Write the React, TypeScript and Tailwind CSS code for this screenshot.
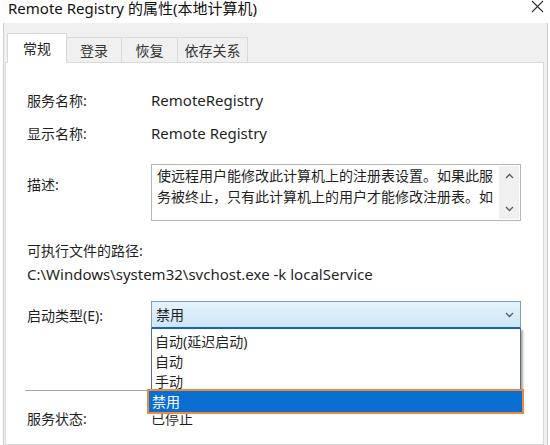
const tabs = [
  { name: "登录", w: "w-[55px]" },
  { name: "恢复", w: "w-[56px]" },
  { name: "依存关系", w: "w-[70px]" },
];

const options = ["自动(延迟启动)", "自动", "手动"];

function Chevron({ up = false }: { up?: boolean }) {
  return (
    <svg width="9" height="6" viewBox="0 0 9 6" className={up ? "rotate-180" : ""}>
      <path d="M1 1 L4.5 4.5 L8 1" fill="none" stroke="#5a5a5a" strokeWidth="1.3" />
    </svg>
  );
}

export default function App() {
  return (
    <div className="relative h-[445px] w-[550px] overflow-hidden bg-white text-[14px] text-[#1f1f1f] font-['Noto_Sans','Noto_Sans_CJK_SC',sans-serif]">
      {/* title bar */}
      <div className="flex h-[23px] items-start justify-between pl-[8px] pr-[6px]">
        <span className="-mt-[2px] text-[15px] leading-[20px] text-[#111]">
          Remote Registry 的属性(本地计算机)
        </span>
        <svg width="13" height="13" viewBox="0 0 13 13">
          <path d="M1 1 L12 12 M12 1 L1 12" stroke="#333" strokeWidth="1.1" />
        </svg>
      </div>

      {/* window body */}
      <div className="ml-[3px] mr-[2px] flex h-[422px] flex-col border-x border-[#cfcfcf] bg-[#f0f0f0]">
        <div className="flex items-end pl-[3px] pt-[10px]">
          <div className="relative z-10 -mb-px flex h-[30px] w-[60px] items-center justify-center border border-b-0 border-[#d9d9d9] bg-white pb-[1px]">
            常规
          </div>
          {tabs.map((t) => (
            <div
              key={t.name}
              className={`flex h-[25px] ${t.w} items-center justify-center border-r border-t border-[#d9d9d9] bg-[#f0f0f0] text-[#333]`}
            >
              {t.name}
            </div>
          ))}
        </div>

        <div className="ml-[1px] mr-[3px] flex flex-1 flex-col border border-[#d9d9d9] bg-white pl-[21px] pr-[22px] pt-[27px]">
          <div className="flex h-[20px] items-center">
            <span className="w-[124px]">服务名称:</span>
            <span className="text-[15px]">RemoteRegistry</span>
          </div>
          <div className="mt-[13px] flex h-[20px] items-center">
            <span className="w-[124px]">显示名称:</span>
            <span className="text-[15px]">Remote Registry</span>
          </div>

          <div className="mt-[21px] flex items-start">
            <span className="mt-[10px] flex h-[20px] w-[124px] items-center">描述:</span>
            <div className="flex h-[57px] flex-1 border border-[#b4b4b4]">
              <div className="flex-1 overflow-hidden pl-[5px] leading-[21px] whitespace-nowrap">
                <div>使远程用户能修改此计算机上的注册表设置。如果此服</div>
                <div>务被终止，只有此计算机上的用户才能修改注册表。如</div>
              </div>
              <div className="my-[1px] mr-[1px] flex w-[20px] flex-col items-center justify-between bg-[#f0f0f0] py-[7px]">
                <Chevron up />
                <Chevron />
              </div>
            </div>
          </div>

          <div className="mt-[19px] flex h-[20px] items-center">可执行文件的路径:</div>
          <div className="mt-[4px] flex h-[20px] items-center text-[15px]">
            C:\Windows\system32\svchost.exe -k localService
          </div>

          <div className="mt-[17px] flex items-center">
            <span className="w-[124px]">启动类型(E):</span>
            <div className="relative flex-1">
              <div className="flex h-[28px] items-center justify-between border border-b-2 border-[#7a9fb8] border-b-[#1565b8] bg-linear-to-b from-[#e4f4fd] to-[#cfe5f7] pl-[4px] pr-[6px]">
                <span>禁用</span>
                <Chevron />
              </div>

              {/* open dropdown list */}
              <div className="absolute left-0 right-0 top-full z-20 flex flex-col">
                <div className="border-x border-[#5f6b78] bg-white pt-[2px] shadow-[2px_1px_2px_rgba(0,0,0,0.35)]">
                  {options.map((o) => (
                    <div key={o} className="flex h-[20px] items-center pl-[3px]">
                      {o}
                    </div>
                  ))}
                </div>
                <div className="-ml-[4px] -mr-[3px] -mt-[2px] border-2 border-[#e98a3e]">
                  <div className="flex h-[21px] items-center bg-[#0a6fd1] pl-[3px] text-white">
                    禁用
                  </div>
                </div>
              </div>
            </div>
          </div>

          <div className="-ml-[2px] mt-[61px] h-px bg-[#a6a6a6]" />

          <div className="mt-[17px] flex h-[20px] items-center">
            <span className="w-[124px]">服务状态:</span>
            <span>已停止</span>
          </div>
        </div>
      </div>
    </div>
  );
}
